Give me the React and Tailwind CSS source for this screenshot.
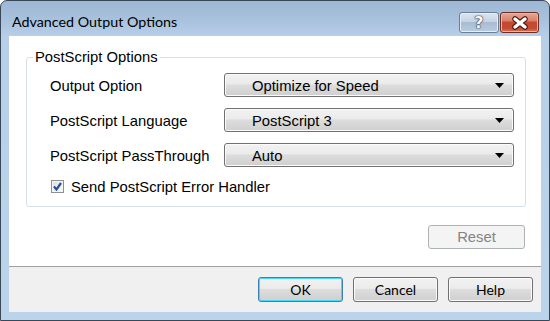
import React from "react";

const Arrow = () => (
  <svg width="9" height="5" viewBox="0 0 9 5" className="block">
    <path d="M0 0 H9 L4.5 5 Z" fill="#000" />
  </svg>
);

function Dropdown({ value }) {
  return (
    <div className="flex h-[24px] w-[290px] items-center justify-between rounded-[3px] border border-[#707070] bg-[linear-gradient(to_bottom,#f2f2f2_0%,#ebebeb_45%,#dddddd_50%,#cfcfcf_100%)] pl-[27px] pr-[9px] shadow-[inset_0_0_0_1px_#fbfbfb]">
      <span className="pt-[2px] leading-none">{value}</span>
      <Arrow />
    </div>
  );
}

function Row({ label, value }) {
  return (
    <div className="flex h-[24px] items-center">
      <span className="w-[174px] pt-[2px] leading-none">{label}</span>
      <Dropdown value={value} />
    </div>
  );
}

function Btn({ children, focused }) {
  return (
    <div
      className={
        "flex h-[25px] w-[85px] items-center justify-center rounded-[3px] border bg-[linear-gradient(to_bottom,#f2f2f2_0%,#ebebeb_45%,#dddddd_50%,#cfcfcf_100%)] font-['Lato','Liberation_Sans',sans-serif] text-[14px] text-black " +
        (focused
          ? "border-[#3c7fb1] shadow-[inset_0_0_0_1px_#48d8fb]"
          : "border-[#707070] shadow-[inset_0_0_0_1px_#fbfbfb]")
      }
    >
      {children}
    </div>
  );
}

export default function App() {
  return (
    <div className="flex h-[321px] w-[550px] flex-col overflow-hidden rounded-t-[7px] border border-[#3a4756] bg-[linear-gradient(to_bottom,#9db7d4_0px,#a9c2de_20px,#b8cfe9_36px,#bcd3ec_100%)] font-['Liberation_Sans',Arial,sans-serif] text-[14.8px] text-black">
      {/* Title bar */}
      <div className="flex h-[35px] shrink-0 items-start justify-between pl-[11px] pr-[10px]">
        <span className="pt-[14px] font-['Lato','Liberation_Sans',sans-serif] text-[14.3px] leading-none text-black">
          Advanced Output Options
        </span>
        <div className="flex gap-[1px] pt-[11px]">
          <div className="flex h-[21px] w-[40px] items-center justify-center rounded-[3px] border border-[#6b7f97] bg-[linear-gradient(to_bottom,#dbe5f0_0%,#c5d3e3_45%,#a9bcd3_50%,#b8cbe0_100%)] shadow-[inset_0_0_0_1px_#e6eef7]">
            <span className="font-['DejaVu_Sans',sans-serif] text-[16px] font-bold leading-none text-[#f4f6f8] [text-shadow:0_0_1px_#2d3a48,0_0_1px_#2d3a48,0_0_2px_#4a5a6c]">
              ?
            </span>
          </div>
          <div className="flex h-[21px] w-[39px] items-center justify-center rounded-[3px] border border-[#6e2d22] bg-[linear-gradient(to_bottom,#e6a896_0%,#d9806b_40%,#c6472f_50%,#c44a32_80%,#d8775c_100%)] shadow-[inset_0_0_0_1px_#eab4a6]">
            <svg width="18" height="14" viewBox="0 0 18 14">
              <path d="M4 3 L14 11 M14 3 L4 11" stroke="#4a1a12" strokeWidth="5.5" strokeLinecap="round" />
              <path d="M4 3 L14 11 M14 3 L4 11" stroke="#ffffff" strokeWidth="3.5" strokeLinecap="round" />
            </svg>
          </div>
        </div>
      </div>

      {/* Client */}
      <div className="flex flex-1 flex-col px-[8px] pb-[8px]">
        <div className="flex flex-1 flex-col bg-white">
          <div className="flex h-[230px] flex-col">
            <div className="relative ml-[17px] mt-[21px] w-[500px] rounded-[3px] border border-[#d5dfe5] pb-[12px] pl-[23px] pr-[11px] pt-[15px]">
              <span className="absolute left-[6px] top-[-10px] bg-white px-[2px] leading-[18px]">
                PostScript Options
              </span>
              <div className="flex flex-col gap-[11px]">
                <Row label="Output Option" value="Optimize for Speed" />
                <Row label="PostScript Language" value="PostScript 3" />
                <Row label="PostScript PassThrough" value="Auto" />
                <div className="flex h-[16px] items-center">
                  <div className="ml-[1px] flex h-[13px] w-[13px] items-center justify-center border border-[#8e8f8f] bg-[linear-gradient(135deg,#dcdcdc,#fdfdfd)] shadow-[inset_0_0_0_1px_#f4f4f4]">
                    <svg width="9" height="9" viewBox="0 0 9 9">
                      <path d="M1 4.5 L3.5 7.5 L8 1" fill="none" stroke="#2a4fa0" strokeWidth="2.2" />
                    </svg>
                  </div>
                  <span className="ml-[7px] pt-[2px] leading-none">Send PostScript Error Handler</span>
                </div>
              </div>
            </div>
            <div className="mt-[18px] flex justify-end pr-[16px]">
              <div className="flex h-[24px] w-[97px] items-center justify-center rounded-[3px] border border-[#adb2b5] bg-[#f4f4f4] pt-[1px] text-[#838383]">
                Reset
              </div>
            </div>
          </div>
          <div className="h-[1px] bg-[#a0a0a0]" />
          <div className="flex flex-1 items-start justify-end gap-[10px] bg-[#f0f0f0] pr-[8px] pt-[10px]">
            <Btn focused>OK</Btn>
            <Btn>Cancel</Btn>
            <Btn>Help</Btn>
          </div>
        </div>
      </div>
    </div>
  );
}
